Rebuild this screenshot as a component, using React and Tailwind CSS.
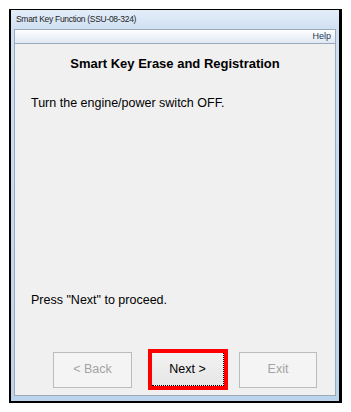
import React from 'react';

const font = { fontFamily: '"Liberation Sans", Arial, sans-serif' };

const App = () => {
  return (
    <div className="w-[351px] h-[412px] bg-white pt-[9px] pl-[9px]" style={font}>
      {/* window */}
      <div className="w-[333px] h-[394px] flex flex-col border-l-2 border-t border-r-[3px] border-b-[2px] border-black bg-[#c4d8ee]">
        {/* title bar */}
        <div className="h-[19px] flex items-center px-[5px] bg-gradient-to-b from-[#e4eef9] to-[#cfe0f2]">
          <span className="text-[8.5px] tracking-[-0.3px] text-[#1e1e1e] leading-none">Smart Key Function (SSU-08-324)</span>
        </div>
        <div className="flex-1 flex flex-col px-[3px] pb-[5px] bg-gradient-to-b from-[#cfe0f2] to-[#bcd3ec]">
          {/* menu bar */}
          <div className="h-[14px] flex items-center justify-end pr-[4px] border border-[#9aaabb] border-b-0 bg-gradient-to-b from-[#ffffff] to-[#dfe8f2]">
            <span className="text-[9px] leading-none text-[#1e395b]">Help</span>
          </div>
          {/* content */}
          <div className="flex-1 flex flex-col border border-[#9aaabb] bg-[#f0f0f0] text-black">
            <h1 className="mt-[12px] text-center text-[13px] font-bold leading-[16px]">Smart Key Erase and Registration</h1>
            <p className="mt-[24px] ml-[16px] text-[12.5px] leading-[15px]">Turn the engine/power switch OFF.</p>
            <div className="flex-1" />
            <p className="ml-[16px] text-[12.5px] leading-[15px]">Press "Next" to proceed.</p>
            <div className="mt-[41px] mb-[5px] flex items-center pl-[38px]">
              <button
                disabled
                className="w-[79px] h-[36px] border border-[#bcbcbc] bg-[#f4f4f4] text-[12.5px] text-[#a3a3a3]"
              >
                &lt; Back
              </button>
              <div className="ml-[16px] w-[80px] h-[41px] border-[4px] border-[#ff0000] bg-[#f0f0f0] flex">
                <button className="flex-1 border-b border-r border-dotted border-black bg-gradient-to-b from-[#f2f2f2] to-[#e6e6e6] text-[12.5px] text-black">
                  Next &gt;
                </button>
              </div>
              <button
                disabled
                className="ml-[11px] w-[78px] h-[36px] border border-[#bcbcbc] bg-[#f4f4f4] text-[12.5px] text-[#a3a3a3]"
              >
                Exit
              </button>
            </div>
          </div>
        </div>
      </div>
    </div>
  );
};

export default App;
